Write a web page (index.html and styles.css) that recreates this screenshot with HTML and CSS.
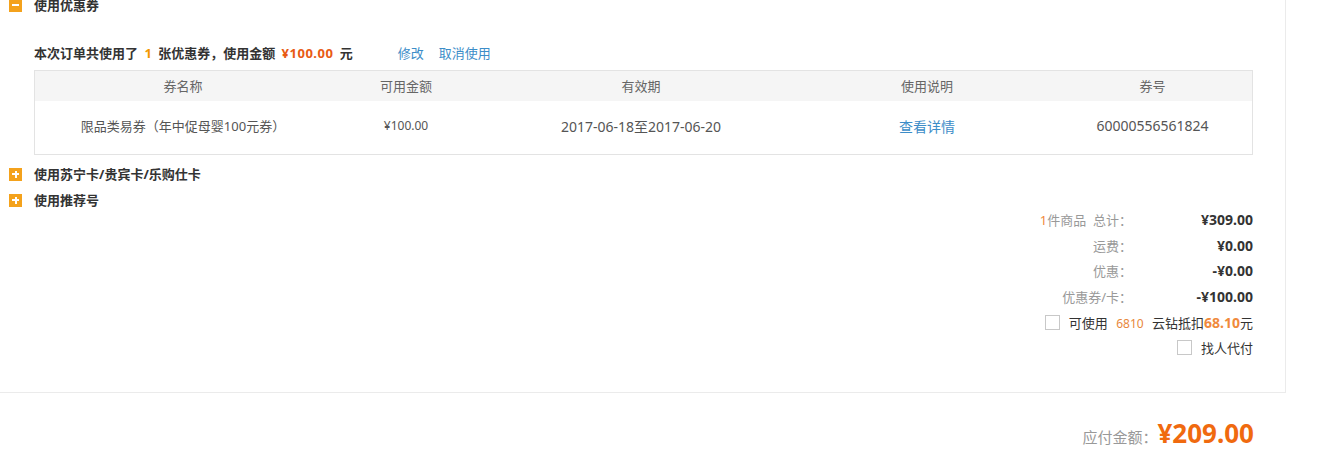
FILE: index.html
```html
<!DOCTYPE html>
<html lang="zh-CN">
<head>
<meta charset="utf-8">
<title>使用优惠券</title>
<link rel="stylesheet" href="styles.css">
</head>
<body>
<div class="page">
  <div class="panel">
    <div class="sec-head">
      <span class="toggle"><span class="bar-h"></span></span>
      <span class="sec-title">使用优惠券</span>
    </div>
    <div class="coupon">
      <div class="coupon-line">
        <span class="summary-text">本次订单共使用了 <em class="num">1</em> 张优惠券，使用金额 <em class="amt">¥100.00</em> 元</span>
        <a class="link edit">修改</a>
        <a class="link">取消使用</a>
      </div>
      <div class="ctable">
        <div class="crow chead">
          <div class="c1">券名称</div>
          <div class="c2">可用金额</div>
          <div class="c3">有效期</div>
          <div class="c4">使用说明</div>
          <div class="c5">券号</div>
        </div>
        <div class="crow cbody">
          <div class="c1">限品类易券（年中促母婴100元券）</div>
          <div class="c2 small">¥100.00</div>
          <div class="c3 big">2017-06-18至2017-06-20</div>
          <div class="c4"><a class="link big">查看详情</a></div>
          <div class="c5 big">60000556561824</div>
        </div>
      </div>
    </div>
    <div class="sec-head closed">
      <span class="toggle"><span class="bar-h"></span><span class="bar-v"></span></span>
      <span class="sec-title">使用苏宁卡/贵宾卡/乐购仕卡</span>
    </div>
    <div class="sec-head closed">
      <span class="toggle"><span class="bar-h"></span><span class="bar-v"></span></span>
      <span class="sec-title">使用推荐号</span>
    </div>
    <div class="totals">
      <div class="trow"><span class="tlabel"><em class="cnt">1</em>件商品&nbsp;&nbsp;总计：</span><span class="tval">¥309.00</span></div>
      <div class="trow"><span class="tlabel">运费：</span><span class="tval">¥0.00</span></div>
      <div class="trow"><span class="tlabel">优惠：</span><span class="tval">-¥0.00</span></div>
      <div class="trow"><span class="tlabel">优惠券/卡：</span><span class="tval">-¥100.00</span></div>
      <div class="trow check"><span class="box"></span><span class="ctext">可使用 <em class="yz">6810</em> 云钻抵扣<b class="yzamt">68.10</b>元</span></div>
      <div class="trow check"><span class="box"></span><span class="ctext">找人代付</span></div>
    </div>
  </div>
  <div class="payable">
    <span class="pay-label">应付金额：</span><span class="pay-amt">¥209.00</span>
  </div>
</div>
</body>
</html>
```

FILE: styles.css
```css
html, body {
  margin: 0;
  padding: 0;
  background: #fff;
}
body {
  font-family: "Noto Sans", "Noto Sans CJK SC", sans-serif;
  color: #333;
  font-size: 13px;
}
em, b { font-style: normal; }
.page {
  width: 1286px;
  margin-top: -8px;
}
.panel {
  border-right: 1px solid #ebebeb;
  border-bottom: 1px solid #ebebeb;
  padding-bottom: 31px;
  padding-top: 6px;
}
.sec-head {
  display: flex;
  align-items: center;
  height: 14px;
  line-height: 14px;
  padding-left: 9px;
  margin-bottom: 12px;
}
.toggle {
  position: relative;
  width: 13px;
  height: 13px;
  background: #f4a21c;
  flex: none;
  margin-right: 12px;
}
.bar-h {
  position: absolute;
  left: 3px;
  top: 5.5px;
  width: 7px;
  height: 2px;
  background: #fff;
}
.bar-v {
  position: absolute;
  left: 5.5px;
  top: 3px;
  width: 2px;
  height: 7px;
  background: #fff;
}
.sec-title {
  font-weight: bold;
  font-size: 13px;
  color: #333;
}
.coupon {
  padding-left: 34px;
  padding-top: 19px;
  margin-bottom: 12px;
}
.coupon-line {
  display: flex;
  align-items: center;
  height: 20px;
  line-height: 20px;
  margin-bottom: 7px;
}
.summary-text {
  font-weight: bold;
  color: #333;
  margin-right: 45px;
}
.num { color: #f39800; margin: 0 3px; }
.amt { color: #e85a13; margin: 0 3px; letter-spacing: 0.5px; }
.link {
  color: #3c8dc8;
  cursor: pointer;
  font-weight: normal;
}
.edit { margin-right: 15px; }
.ctable {
  width: 1217px;
  border: 1px solid #e3e3e3;
}
.crow {
  display: flex;
  text-align: center;
  align-items: center;
}
.chead {
  height: 30px;
  background: #f5f5f5;
  color: #666;
  font-size: 13px;
  padding-bottom: 2px;
  box-sizing: border-box;
}
.cbody {
  height: 53px;
  color: #555;
  font-size: 13px;
  padding-bottom: 4px;
  box-sizing: border-box;
}
.c1 { width: 296px; }
.c2 { width: 150px; }
.c3 { width: 320px; }
.c4 { width: 252px; }
.c5 { width: 199px; }
.small { font-size: 12px; }
.big { font-size: 14px; }
.totals {
  display: flex;
  flex-direction: column;
  align-items: flex-end;
  padding-right: 32px;
  margin-top: -12px;
}
.trow {
  display: flex;
  align-items: center;
  height: 25.6px;
}
.tlabel {
  color: #999;
  font-size: 13px;
  text-align: right;
}
.cnt { color: #f08a3c; }
.tval {
  width: 121px;
  text-align: right;
  font-weight: bold;
  font-size: 14px;
  color: #333;
}
.box {
  width: 13px;
  height: 13px;
  border: 1px solid #c8c8c8;
  background: #fff;
  margin-right: 9px;
}
.ctext {
  font-size: 13px;
  color: #333;
}
.yz {
  color: #e8883c;
  font-size: 12px;
  margin: 0 5px;
}
.yzamt {
  color: #f08a3c;
  font-weight: bold;
  font-size: 14px;
}
.payable {
  display: flex;
  justify-content: flex-end;
  align-items: baseline;
  padding-right: 32px;
  padding-top: 22px;
}
.pay-label {
  color: #999;
  font-size: 15px;
}
.pay-amt {
  color: #f06a0f;
  font-weight: bold;
  font-size: 26px;
}
```
